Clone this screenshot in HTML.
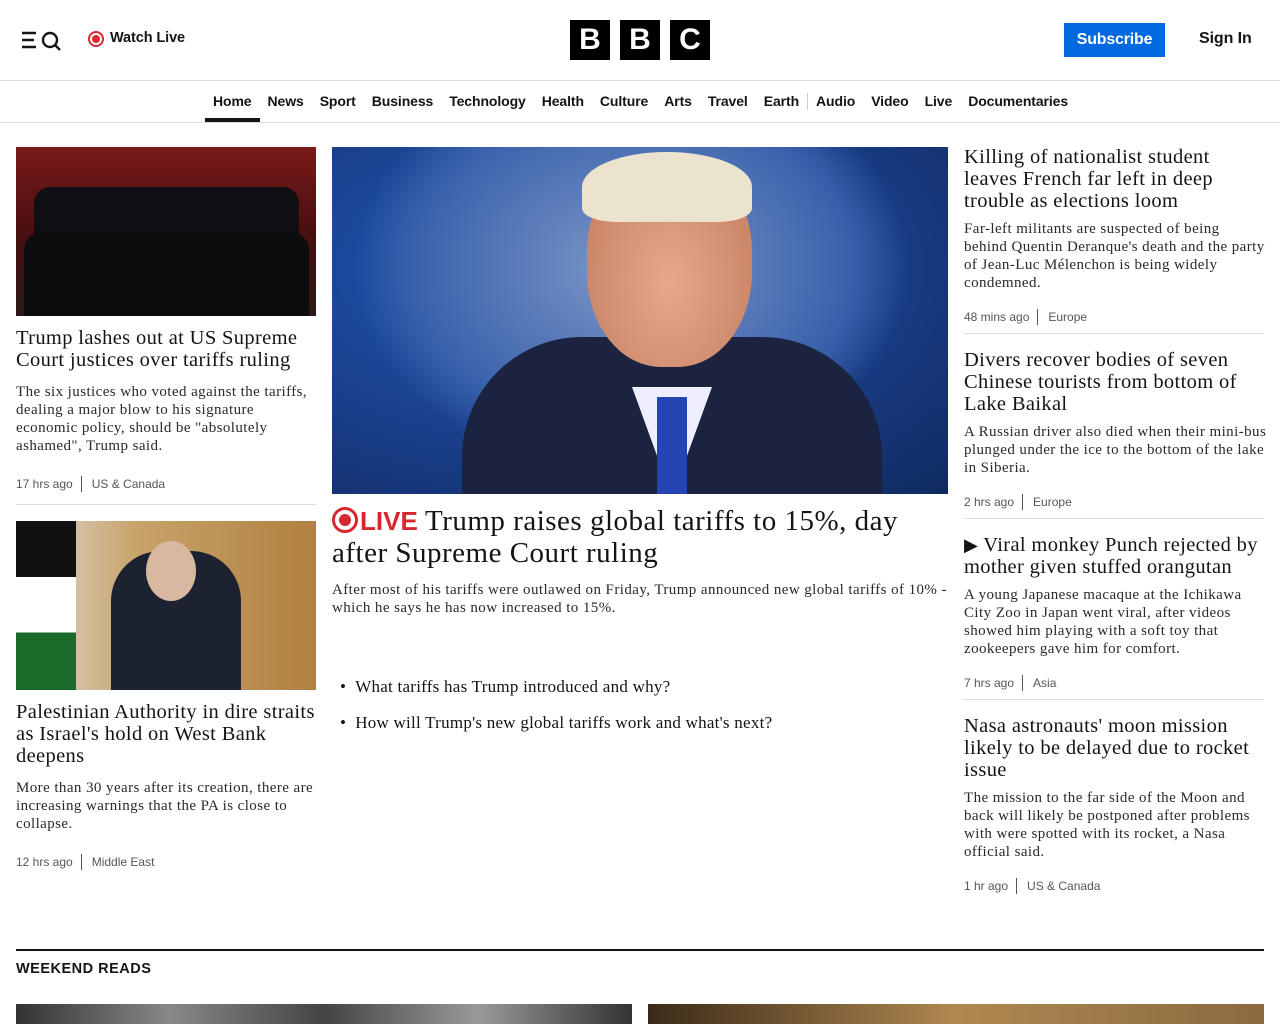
<!DOCTYPE html>
<html><head><meta charset="utf-8"><style>
*{box-sizing:border-box;margin:0;padding:0}
body{width:1280px;height:1024px;overflow:hidden;background:#fff;font-family:"Liberation Sans",sans-serif;color:#141414;position:relative}
.a{position:absolute}
.serif{font-family:"Liberation Serif",serif}
h3{font-family:"Liberation Serif",serif;font-weight:normal;font-size:20.5px;line-height:22px;color:#141414;letter-spacing:0.35px}
p.d{font-family:"Liberation Serif",serif;font-size:15px;line-height:18px;color:#2a2a2a;letter-spacing:0.42px}
.meta{font-size:12px;color:#545658}
.meta span{display:inline-block;border-left:1px solid #545658;padding-left:10px;margin-left:8px;height:16px;line-height:16px}
.nav a{color:#141414;text-decoration:none;font-size:14px;font-weight:bold;margin-right:16px;letter-spacing:-0.1px}
hr.s{position:absolute;border:0;border-top:1px solid #ddd}
</style></head><body>
<svg class="a" style="left:22px;top:31px" width="40" height="20" viewBox="0 0 40 20"><g stroke="#141414" stroke-width="2.4" fill="none"><path d="M0 2h14M0 9h12M0 16h14"/><circle cx="28" cy="9" r="7"/><path d="M33 14l5 5"/></g></svg>
<div class="a" style="left:88px;top:31px;width:16px;height:16px;border-radius:50%;border:2px solid #d8272f;background:#fff"><div style="margin:2px;width:8px;height:8px;border-radius:50%;background:#d8272f"></div></div>
<div class="a" style="left:110px;top:30px;font-size:14.5px;font-weight:bold;letter-spacing:-0.1px">Watch Live</div>
<div class="a" style="left:570px;top:20px;display:flex;gap:10px">
<div style="width:40px;height:40px;background:#000;color:#fff;font-weight:bold;font-size:30px;text-align:center;line-height:40px">B</div>
<div style="width:40px;height:40px;background:#000;color:#fff;font-weight:bold;font-size:30px;text-align:center;line-height:40px">B</div>
<div style="width:40px;height:40px;background:#000;color:#fff;font-weight:bold;font-size:30px;text-align:center;line-height:40px">C</div></div>
<div class="a" style="left:1064px;top:23px;width:101px;height:34px;background:#0168e0;color:#fff;font-size:16px;font-weight:bold;text-align:center;line-height:34px;letter-spacing:-0.2px">Subscribe</div>
<div class="a" style="left:1199px;top:30px;font-size:16px;font-weight:bold;letter-spacing:-0.1px">Sign In</div>
<hr class="s" style="left:0;top:80px;width:1280px">
<div class="a nav" style="left:213px;top:93px;white-space:nowrap"><a>Home</a><a>News</a><a>Sport</a><a>Business</a><a>Technology</a><a>Health</a><a>Culture</a><a>Arts</a><a>Travel</a><a style="margin-right:8px">Earth</a><span style="border-left:1px solid #ccc;margin-right:8px"></span><a>Audio</a><a>Video</a><a>Live</a><a>Documentaries</a></div>
<div class="a" style="left:205px;top:118px;width:55px;height:4px;background:#141414"></div>
<hr class="s" style="left:0;top:122px;width:1280px">
<div class="a" style="left:16px;top:147px;width:300px;height:169px;background:linear-gradient(#7a1a1a,#4a0f10 50%,#2a1a18)">
<div style="position:absolute;left:18px;top:40px;width:265px;height:50px;background:#101014;border-radius:16px 16px 0 0"></div>
<div style="position:absolute;left:8px;top:85px;width:285px;height:84px;background:#0d0d10;border-radius:18px 18px 0 0"></div></div>
<h3 class="a" style="left:16px;top:327px;width:303px">Trump lashes out at US Supreme Court justices over tariffs ruling</h3>
<p class="a d" style="left:16px;top:383px;width:303px">The six justices who voted against the tariffs, dealing a major blow to his signature economic policy, should be "absolutely ashamed", Trump said.</p>
<div class="a meta" style="left:16px;top:476px">17 hrs ago<span>US &amp; Canada</span></div>
<hr class="s" style="left:16px;top:504px;width:300px">
<div class="a" style="left:16px;top:521px;width:300px;height:169px;background:linear-gradient(90deg,#ddd,#c8a36a 40%,#b08040)">
<div style="position:absolute;left:0;top:0;width:60px;height:169px;background:linear-gradient(#111 33%,#fff 33%,#fff 66%,#1a6a2a 66%)"></div>
<div style="position:absolute;left:95px;top:30px;width:130px;height:139px;background:#1d2230;border-radius:50px 50px 0 0"></div>
<div style="position:absolute;left:130px;top:20px;width:50px;height:60px;background:#d8b8a0;border-radius:50%"></div></div>
<h3 class="a" style="left:16px;top:701px;width:303px">Palestinian Authority in dire straits as Israel's hold on West Bank deepens</h3>
<p class="a d" style="left:16px;top:779px;width:303px">More than 30 years after its creation, there are increasing warnings that the PA is close to collapse.</p>
<div class="a meta" style="left:16px;top:854px">12 hrs ago<span>Middle East</span></div>
<div class="a" style="left:332px;top:147px;width:616px;height:347px;background:radial-gradient(ellipse at 35% 35%,#1d59b8,#1a3f8a 55%,#0f2a60);overflow:hidden">
<div style="position:absolute;left:20px;top:-90px;width:560px;height:420px;border-radius:50%;background:radial-gradient(ellipse,#7f98c8 0,#3a62ac 55%,transparent 70%)"></div>
<div style="position:absolute;left:130px;top:190px;width:420px;height:200px;background:#1b2340;border-radius:120px 120px 0 0"></div>
<div style="position:absolute;left:255px;top:10px;width:165px;height:210px;background:radial-gradient(ellipse at 50% 60%,#e6a88a,#c27a5c);border-radius:45%"></div>
<div style="position:absolute;left:250px;top:5px;width:170px;height:70px;background:#ece3cf;border-radius:50% 50% 20% 20%"></div>
<div style="position:absolute;left:300px;top:240px;width:80px;height:110px;background:#eef;clip-path:polygon(0 0,100% 0,50% 100%)"></div>
<div style="position:absolute;left:325px;top:250px;width:30px;height:100px;background:#2545b5"></div></div>
<div class="a serif" style="left:332px;top:505px;width:620px;font-size:29px;line-height:32px;color:#141414;letter-spacing:0.5px"><span style="display:inline-block;width:26px;height:26px;border:3px solid #d8272f;border-radius:50%;vertical-align:-3px;position:relative;margin-right:2px"><span style="position:absolute;left:4px;top:4px;width:12px;height:12px;border-radius:50%;background:#d8272f"></span></span><b style="color:#d8272f;font-family:'Liberation Sans',sans-serif;font-size:26px;letter-spacing:0">LIVE</b> Trump raises global tariffs to 15%, day after Supreme Court ruling</div>
<p class="a d" style="left:332px;top:581px;width:616px">After most of his tariffs were outlawed on Friday, Trump announced new global tariffs of 10% - which he says he has now increased to 15%.</p>
<div class="a serif" style="left:340px;top:669px;font-size:17px;line-height:36px;letter-spacing:0.25px">• &nbsp;What tariffs has Trump introduced and why?<br>• &nbsp;How will Trump's new global tariffs work and what's next?</div>
<h3 class="a" style="left:964px;top:146px;width:303px">Killing of nationalist student leaves French far left in deep trouble as elections loom</h3>
<p class="a d" style="left:964px;top:220px;width:303px">Far-left militants are suspected of being behind Quentin Deranque's death and the party of Jean-Luc Mélenchon is being widely condemned.</p>
<div class="a meta" style="left:964px;top:309px">48 mins ago<span>Europe</span></div>
<hr class="s" style="left:964px;top:333px;width:300px">
<h3 class="a" style="left:964px;top:349px;width:303px">Divers recover bodies of seven Chinese tourists from bottom of Lake Baikal</h3>
<p class="a d" style="left:964px;top:423px;width:303px">A Russian driver also died when their mini-bus plunged under the ice to the bottom of the lake in Siberia.</p>
<div class="a meta" style="left:964px;top:494px">2 hrs ago<span>Europe</span></div>
<hr class="s" style="left:964px;top:518px;width:300px">
<h3 class="a" style="left:964px;top:534px;width:303px"><span style="font-size:18px">▶</span> Viral monkey Punch rejected by mother given stuffed orangutan</h3>
<p class="a d" style="left:964px;top:586px;width:303px">A young Japanese macaque at the Ichikawa City Zoo in Japan went viral, after videos showed him playing with a soft toy that zookeepers gave him for comfort.</p>
<div class="a meta" style="left:964px;top:675px">7 hrs ago<span>Asia</span></div>
<hr class="s" style="left:964px;top:699px;width:300px">
<h3 class="a" style="left:964px;top:715px;width:300px">Nasa astronauts' moon mission likely to be delayed due to rocket issue</h3>
<p class="a d" style="left:964px;top:789px;width:303px">The mission to the far side of the Moon and back will likely be postponed after problems with were spotted with its rocket, a Nasa official said.</p>
<div class="a meta" style="left:964px;top:878px">1 hr ago<span>US &amp; Canada</span></div>
<div class="a" style="left:16px;top:949px;width:1248px;height:2px;background:#141414"></div>
<div class="a" style="left:16px;top:961px;font-size:14.5px;font-weight:bold;letter-spacing:0.5px">WEEKEND READS</div>
<div class="a" style="left:16px;top:1004px;width:616px;height:20px;background:linear-gradient(90deg,#333,#888,#444,#999,#333)"></div>
<div class="a" style="left:648px;top:1004px;width:616px;height:20px;background:linear-gradient(90deg,#3a2a18,#b08850 50%,#8a6a40)"></div>
</body></html>
